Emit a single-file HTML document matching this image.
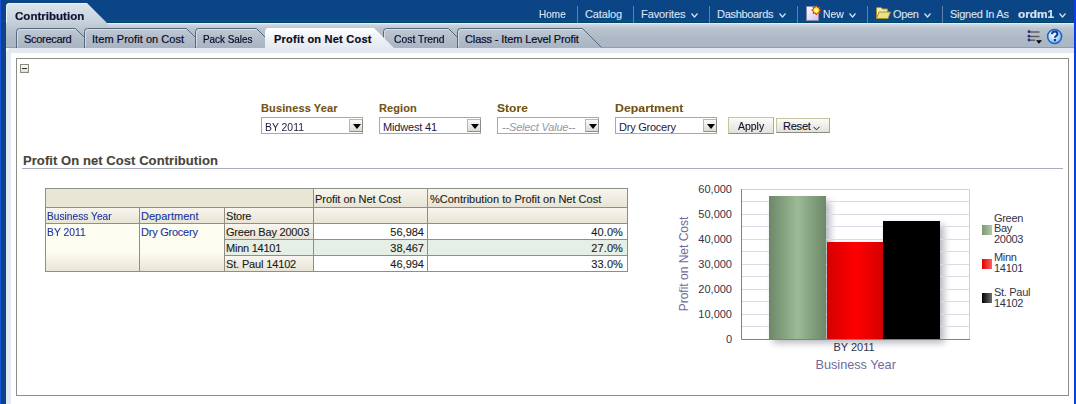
<!DOCTYPE html>
<html><head><meta charset="utf-8">
<style>
*{margin:0;padding:0;box-sizing:border-box}
html,body{width:1076px;height:404px;overflow:hidden;background:#fff;font-family:"Liberation Sans",sans-serif;font-size:11px}
.a{position:absolute;white-space:nowrap;line-height:11px;-webkit-text-stroke:0.12px currentColor}
#hdr{left:0;top:0;width:1076px;height:23px;background:linear-gradient(#0c4585 0,#0c4585 20px,#08507f 20px,#08507f 22px,#044272 22px)}
#lb{left:0;top:0;width:1px;height:404px;background:#1a4fe0}
#lb2{left:1px;top:22px;width:5px;height:382px;background:#0c4585}
#rb{left:1074px;top:0;width:2px;height:404px;background:#0a3fe0}
#tabbar{left:6px;top:23px;width:1068px;height:25px;background:linear-gradient(#e6ecf0 0,#e6ecf0 1px,#d4dde4 1px,#c6d0da 3px,#b8c3ce 6px,#aeb9c6 15px,#a9b5c2 24px,#909eac 24px,#909eac 25px)}
#panel{left:6px;top:48px;width:1068px;height:356px;background:#e2e9f0;border-top-left-radius:5px}
#panelin{left:11px;top:53px;width:1063px;height:351px;background:#fff}
#box{left:16px;top:58px;width:1053px;height:338px;border:1px solid #8e8e86}
.nav{color:#d6e4f3;top:9px}
.sep{position:absolute;top:6px;width:1px;height:17px;background:#5d83b2}
.tab{color:#0a0a28;top:34px;-webkit-text-stroke:0.2px #0a0a28}
.flbl{color:#745414;font-weight:bold;top:103px}
.sel{position:absolute;top:117px;height:17px;border:1px solid #a9a9a2;background:#fff}
.sel .v{position:absolute;left:2px;top:4px;color:#1a1a3a;line-height:11px}
.sel .btn{position:absolute;top:1px;width:14px;height:13px;border:1px solid #b8b8b0;border-right-color:#8c8c86;border-bottom-color:#8c8c86;background:linear-gradient(#fafaf8,#dcdcd6)}
.sel .btn:after{content:"";position:absolute;left:3px;top:4px;border-left:4px solid transparent;border-right:4px solid transparent;border-top:5px solid #000}
.pb{position:absolute;border:1px solid #c9c3a0;border-bottom-color:#8c8c84;border-right-color:#a8a89c;background:linear-gradient(#fbfbf8,#e2e2da)}
td{padding:0}
.tc{color:#1c1c1c}
.tb{color:#2a3aa8}
.yl{color:#33334a;font-size:11px}
</style></head><body>
<div class="a" id="hdr"></div>
<div class="a" id="tabbar"></div>
<div class="a" id="panel"></div>
<div class="a" id="panelin"></div>
<div class="a" id="lb"></div>
<div class="a" id="lb2"></div>
<div class="a" id="rb"></div>
<div class="a" id="box"></div>

<!-- tabs svg -->
<svg class="a" style="left:0;top:0" width="620" height="50" viewBox="0 0 620 50">
<defs>
<linearGradient id="gC" gradientUnits="userSpaceOnUse" x1="0" y1="3" x2="0" y2="30"><stop offset="0" stop-color="#dce5eb"/><stop offset="0.3" stop-color="#d3dde5"/><stop offset="0.7" stop-color="#c6d1db"/><stop offset="1" stop-color="#b9c4cf"/></linearGradient>
<linearGradient id="gT" x1="0" y1="0" x2="0" y2="1"><stop offset="0" stop-color="#bfcad4"/><stop offset="0.4" stop-color="#b4bfcb"/><stop offset="1" stop-color="#a8b4c1"/></linearGradient>
<linearGradient id="gA" x1="0" y1="0" x2="0" y2="1"><stop offset="0" stop-color="#ffffff"/><stop offset="0.55" stop-color="#edf1f5"/><stop offset="1" stop-color="#e2e9f0"/></linearGradient>
</defs>
<path d="M6,30 V6.5 Q6,3 9.5,3 H87 L106,22 Q108,25 112,30 Z" fill="url(#gC)"/>
<path d="M6.5,23 V6.5 Q6.5,3.5 9.5,3.5 H87" fill="none" stroke="#eef3f6" stroke-width="1"/>
<path d="M16.5,48 V31.5 Q16.5,28.5 19.5,28.5 H75.5 L94.5,47.5 V48 Z" fill="url(#gT)"/>
<path d="M17.5,47 V32 Q17.5,29.5 20,29.5 H75" fill="none" stroke="#dce4ea" stroke-width="1" opacity="0.8"/>
<path d="M16.5,48 V31.5 Q16.5,28.5 19.5,28.5 H75.5 L94.5,47.5" fill="none" stroke="#56687c" stroke-width="1"/>
<path d="M84.5,48 V31.5 Q84.5,28.5 87.5,28.5 H186.5 L205.5,47.5 V48 Z" fill="url(#gT)"/>
<path d="M85.5,47 V32 Q85.5,29.5 88,29.5 H186" fill="none" stroke="#dce4ea" stroke-width="1" opacity="0.8"/>
<path d="M84.5,48 V31.5 Q84.5,28.5 87.5,28.5 H186.5 L205.5,47.5" fill="none" stroke="#56687c" stroke-width="1"/>
<path d="M195.5,48 V31.5 Q195.5,28.5 198.5,28.5 H256.5 L275.5,47.5 V48 Z" fill="url(#gT)"/>
<path d="M196.5,47 V32 Q196.5,29.5 199,29.5 H256" fill="none" stroke="#dce4ea" stroke-width="1" opacity="0.8"/>
<path d="M195.5,48 V31.5 Q195.5,28.5 198.5,28.5 H256.5 L275.5,47.5" fill="none" stroke="#56687c" stroke-width="1"/>
<path d="M383.5,48 V31.5 Q383.5,28.5 386.5,28.5 H448.5 L467.5,47.5 V48 Z" fill="url(#gT)"/>
<path d="M384.5,47 V32 Q384.5,29.5 387,29.5 H448" fill="none" stroke="#dce4ea" stroke-width="1" opacity="0.8"/>
<path d="M383.5,48 V31.5 Q383.5,28.5 386.5,28.5 H448.5 L467.5,47.5" fill="none" stroke="#56687c" stroke-width="1"/>
<path d="M457.5,48 V31.5 Q457.5,28.5 460.5,28.5 H582.5 L601.5,47.5 V48 Z" fill="url(#gT)"/>
<path d="M458.5,47 V32 Q458.5,29.5 461,29.5 H582" fill="none" stroke="#dce4ea" stroke-width="1" opacity="0.8"/>
<path d="M457.5,48 V31.5 Q457.5,28.5 460.5,28.5 H582.5 L601.5,47.5" fill="none" stroke="#56687c" stroke-width="1"/>
<path d="M265,49 V31.5 Q265,28 268.5,28 H374 L394,48 V49 Z" fill="url(#gA)"/>
</svg>
<div class="a" style="left:15px;top:11px;font-weight:bold;color:#101030;transform:scaleX(1.05);transform-origin:0 0;-webkit-text-stroke:0.2px #101030">Contribution</div>
<div class="a tab" style="left:24px;letter-spacing:-0.3px">Scorecard</div>
<div class="a tab" style="left:92px;letter-spacing:0.06px">Item Profit on Cost</div>
<div class="a tab" style="left:203px;transform:scaleX(0.90);transform-origin:0 0">Pack Sales</div>
<div class="a tab" style="left:274px;font-weight:bold;color:#0c0c20;letter-spacing:0.23px">Profit on Net Cost</div>
<div class="a tab" style="left:394px;transform:scaleX(0.941);transform-origin:0 0">Cost Trend</div>
<div class="a tab" style="left:465px;letter-spacing:-0.12px">Class - Item Level Profit</div>

<!-- header nav -->
<div class="a nav" style="left:539px;transform:scaleX(0.91);transform-origin:0 0">Home</div>
<div class="sep" style="left:577px"></div>
<div class="a nav" style="left:585px;letter-spacing:-0.13px">Catalog</div>
<div class="sep" style="left:633px"></div>
<div class="a nav" style="left:641px;letter-spacing:-0.09px">Favorites</div>
<svg class="a" style="left:691px;top:13px" width="8" height="6"><path d="M0.5,0.5 L3.5,4 L6.5,0.5" fill="none" stroke="#d6e4f3" stroke-width="1.2"/></svg>
<div class="sep" style="left:709px"></div>
<div class="a nav" style="left:717px;letter-spacing:-0.31px">Dashboards</div>
<svg class="a" style="left:779px;top:13px" width="8" height="6"><path d="M0.5,0.5 L3.5,4 L6.5,0.5" fill="none" stroke="#d6e4f3" stroke-width="1.2"/></svg>
<div class="sep" style="left:797px"></div>
<svg class="a" style="left:804px;top:4px" width="18" height="18" viewBox="0 0 18 18">
<defs><linearGradient id="gP" x1="0" y1="0" x2="1" y2="1"><stop offset="0" stop-color="#ffffff"/><stop offset="1" stop-color="#c8c4e0"/></linearGradient></defs>
<path d="M2.5,2.5 H12 L14.5,5 V16.5 H2.5 Z" fill="url(#gP)" stroke="#8a86b0" stroke-width="1"/>
<path d="M16.90,6.20 L14.98,7.31 L15.55,9.45 L13.41,8.88 L12.30,10.80 L11.19,8.88 L9.05,9.45 L9.62,7.31 L7.70,6.20 L9.62,5.09 L9.05,2.95 L11.19,3.52 L12.30,1.60 L13.41,3.52 L15.55,2.95 L14.98,5.09 Z" fill="#ffd830" stroke="#c8400c" stroke-width="1"/><circle cx="12.3" cy="6.2" r="2" fill="#fff890"/>
</svg>
<div class="a nav" style="left:823px;transform:scaleX(0.95);transform-origin:0 0">New</div>
<svg class="a" style="left:849px;top:13px" width="8" height="6"><path d="M0.5,0.5 L3.5,4 L6.5,0.5" fill="none" stroke="#d6e4f3" stroke-width="1.2"/></svg>
<div class="sep" style="left:867px"></div>
<svg class="a" style="left:875px;top:6px" width="17" height="14" viewBox="0 0 17 14">
<path d="M1.5,12.5 V2.5 Q1.5,1.5 2.5,1.5 H6 L7.5,3 H12.5 V5.5" fill="#f4ecac" stroke="#a89030" stroke-width="1"/>
<path d="M1.5,12.5 L4,6 H15.5 L13,12.5 Z" fill="#ece08a" stroke="#a89030" stroke-width="1"/>
</svg>
<div class="a nav" style="left:893px;letter-spacing:-0.33px">Open</div>
<svg class="a" style="left:924px;top:13px" width="8" height="6"><path d="M0.5,0.5 L3.5,4 L6.5,0.5" fill="none" stroke="#d6e4f3" stroke-width="1.2"/></svg>
<div class="sep" style="left:942px"></div>
<div class="a nav" style="left:950px;letter-spacing:-0.26px">Signed In As</div>
<div class="a nav" style="left:1018px;font-weight:bold;transform:scaleX(1.075);transform-origin:0 0;-webkit-text-stroke:0.2px #d6e4f3">ordm1</div>
<svg class="a" style="left:1059px;top:13px" width="8" height="6"><path d="M0.5,0.5 L3.5,4 L6.5,0.5" fill="none" stroke="#d6e4f3" stroke-width="1.2"/></svg>

<!-- toolbar icons -->
<svg class="a" style="left:1026px;top:29px" width="18" height="17" viewBox="0 0 18 17">
<g stroke="#5a5a5a" stroke-width="1.4"><path d="M3.5,3 H13.5"/><path d="M3.5,7.5 H13.5"/><path d="M3.5,11.2 H9"/></g>
<g fill="#30288a"><circle cx="3" cy="2.7" r="1.4"/><circle cx="3" cy="7.2" r="1.4"/><circle cx="3" cy="11" r="1.4"/></g>
<path d="M10,11.3 H16 L13,14.8 Z" fill="#000"/>
</svg>
<svg class="a" style="left:1046px;top:28px" width="18" height="18" viewBox="0 0 18 18">
<defs><radialGradient id="gH" cx="0.42" cy="0.38" r="0.65"><stop offset="0" stop-color="#ffffff"/><stop offset="0.45" stop-color="#c4e4fb"/><stop offset="1" stop-color="#6cb0ea"/></radialGradient></defs>
<circle cx="8.6" cy="8.5" r="7" fill="url(#gH)" stroke="#1c62c8" stroke-width="1.5"/>
<path d="M6.1,6.3 Q6.1,3.6 8.7,3.6 Q11.4,3.6 11.4,6 Q11.4,7.4 10,8.2 Q9,8.8 9,9.8" fill="none" stroke="#0c3c9c" stroke-width="2"/>
<rect x="7.8" y="11" width="2.2" height="2.2" fill="#0c3c9c"/>
</svg>

<!-- collapse icon -->
<div class="a" style="left:20px;top:64px;width:9px;height:9px;border:1px solid #8a8a82;background:linear-gradient(#fbfbf6,#e0e0d4)"></div>
<div class="a" style="left:22px;top:68px;width:5px;height:1px;background:#303030"></div>

<!-- filters -->
<div class="a flbl" style="left:261px;letter-spacing:0.12px">Business Year</div>
<div class="a flbl" style="left:379px;letter-spacing:0.08px">Region</div>
<div class="a flbl" style="left:497px;transform:scaleX(1.10);transform-origin:0 0">Store</div>
<div class="a flbl" style="left:615px;transform:scaleX(1.12);transform-origin:0 0">Department</div>

<div class="sel" style="left:261px;width:102px"><div class="v" style="left:3px;transform:scaleX(0.945);transform-origin:0 0">BY 2011</div><div class="btn" style="left:87px"></div></div>
<div class="sel" style="left:379px;width:102px"><div class="v" style="left:3px;letter-spacing:-0.18px">Midwest 41</div><div class="btn" style="left:87px"></div></div>
<div class="sel" style="left:497px;width:102px"><div class="v" style="left:4px;font-style:italic;color:#9896aa;-webkit-text-stroke:0;letter-spacing:-0.17px">--Select Value--</div><div class="btn" style="left:87px"></div></div>
<div class="sel" style="left:615px;width:102px"><div class="v" style="left:3px;letter-spacing:-0.24px">Dry Grocery</div><div class="btn" style="left:87px"></div></div>

<div class="pb" style="left:728px;top:117px;width:46px;height:17px"></div>
<div class="a" style="left:738px;top:121px;color:#101030;transform:scaleX(0.95);transform-origin:0 0">Apply</div>
<div class="pb" style="left:776px;top:118px;width:54px;height:15px"></div>
<div class="a" style="left:783px;top:121px;color:#101030;letter-spacing:-0.22px">Reset</div>
<svg class="a" style="left:813px;top:126px" width="8" height="6"><path d="M0.5,0.8 L3.5,3.8 L6.5,0.8" fill="none" stroke="#101030" stroke-width="1"/></svg>

<!-- heading -->
<div class="a" style="left:23px;top:154px;font-size:13px;line-height:13px;font-weight:bold;color:#47443a;letter-spacing:0.07px">Profit On net Cost Contribution</div>
<div class="a" style="left:22px;top:168px;width:1041px;height:1px;background:#a7adba"></div>

<!-- table -->
<div class="a" style="left:45px;top:188px;width:583px;height:84px;background:#8f8f88"></div>
<div class="a" style="left:46px;top:189px;width:267px;height:18px;background:#e9e6d6"></div>
<div class="a" style="left:314px;top:189px;width:113px;height:18px;background:linear-gradient(#f8f6ee,#e7e4d5)"></div>
<div class="a" style="left:428px;top:189px;width:199px;height:18px;background:linear-gradient(#f8f6ee,#e7e4d5)"></div>
<div class="a" style="left:46px;top:208px;width:93px;height:15px;background:linear-gradient(#f8f6ee,#e7e4d5)"></div>
<div class="a" style="left:140px;top:208px;width:84px;height:15px;background:linear-gradient(#f8f6ee,#e7e4d5)"></div>
<div class="a" style="left:225px;top:208px;width:88px;height:15px;background:linear-gradient(#f8f6ee,#e7e4d5)"></div>
<div class="a" style="left:314px;top:208px;width:113px;height:15px;background:linear-gradient(#f8f6ee,#e7e4d5)"></div>
<div class="a" style="left:428px;top:208px;width:199px;height:15px;background:linear-gradient(#f8f6ee,#e7e4d5)"></div>
<div class="a" style="left:46px;top:224px;width:93px;height:47px;background:linear-gradient(#fdfdf1 0,#fcfcf0 28px,#e9e6d6 47px)"></div>
<div class="a" style="left:140px;top:224px;width:84px;height:47px;background:linear-gradient(#fdfdf1 0,#fcfcf0 28px,#e9e6d6 47px)"></div>
<div class="a" style="left:225px;top:224px;width:88px;height:15px;background:linear-gradient(#f8f6ee,#e7e4d5)"></div>
<div class="a" style="left:225px;top:240px;width:88px;height:15px;background:#e6efe5"></div>
<div class="a" style="left:225px;top:256px;width:88px;height:15px;background:linear-gradient(#f8f6ee,#e7e4d5)"></div>
<div class="a" style="left:314px;top:224px;width:113px;height:15px;background:#fff"></div>
<div class="a" style="left:314px;top:240px;width:113px;height:15px;background:#e6efe5"></div>
<div class="a" style="left:314px;top:256px;width:113px;height:15px;background:#fff"></div>
<div class="a" style="left:428px;top:224px;width:199px;height:15px;background:#fff"></div>
<div class="a" style="left:428px;top:240px;width:199px;height:15px;background:#e6efe5"></div>
<div class="a" style="left:428px;top:256px;width:199px;height:15px;background:#fff"></div>
<div class="a" style="left:315px;top:194px;color:#1c1c1c;letter-spacing:-0.05px">Profit on Net Cost</div>
<div class="a" style="left:430px;top:194px;color:#1c1c1c;letter-spacing:0px">%Contribution to Profit on Net Cost</div>
<div class="a" style="left:47px;top:211px;color:#2236a2;transform:scaleX(0.927);transform-origin:0 0">Business Year</div>
<div class="a" style="left:141px;top:211px;color:#2236a2;letter-spacing:0px">Department</div>
<div class="a" style="left:226px;top:211px;color:#1c1c1c;letter-spacing:-0.2px">Store</div>
<div class="a" style="left:47px;top:227px;color:#2236a2;transform:scaleX(0.938);transform-origin:0 0">BY 2011</div>
<div class="a" style="left:141px;top:227px;color:#2236a2;letter-spacing:-0.24px">Dry Grocery</div>
<div class="a" style="left:226px;top:227px;color:#1c1c1c;letter-spacing:-0.21px">Green Bay 20003</div>
<div class="a" style="left:226px;top:243px;color:#1c1c1c;letter-spacing:-0.24px">Minn 14101</div>
<div class="a" style="left:226px;top:259px;color:#1c1c1c;letter-spacing:-0.15px">St. Paul 14102</div>
<div class="a" style="right:652px;top:227px;color:#1c1c1c;letter-spacing:0px">56,984</div>
<div class="a" style="right:453px;top:227px;color:#1c1c1c;letter-spacing:0.1px">40.0%</div>
<div class="a" style="right:652px;top:243px;color:#1c1c1c;letter-spacing:0px">38,467</div>
<div class="a" style="right:453px;top:243px;color:#1c1c1c;letter-spacing:0.1px">27.0%</div>
<div class="a" style="right:652px;top:259px;color:#1c1c1c;letter-spacing:0px">46,994</div>
<div class="a" style="right:453px;top:259px;color:#1c1c1c;letter-spacing:0.1px">33.0%</div>

<!-- chart -->
<svg class="a" style="left:660px;top:175px" width="410" height="210" viewBox="660 175 410 210">
<defs>
<linearGradient id="bG" x1="0" y1="0" x2="1" y2="0"><stop offset="0" stop-color="#6c8868"/><stop offset="0.5" stop-color="#9cba96"/><stop offset="1" stop-color="#6c8868"/></linearGradient>
<linearGradient id="bR" x1="0" y1="0" x2="1" y2="0"><stop offset="0" stop-color="#d40000"/><stop offset="0.5" stop-color="#ff0000"/><stop offset="1" stop-color="#d40000"/></linearGradient>
<linearGradient id="lG" x1="0" y1="0" x2="1" y2="0"><stop offset="0" stop-color="#7a9a72"/><stop offset="1" stop-color="#b4c8ac"/></linearGradient>
<linearGradient id="lR" x1="0" y1="0" x2="1" y2="0"><stop offset="0" stop-color="#e00000"/><stop offset="1" stop-color="#ff6060"/></linearGradient>
<linearGradient id="lB" x1="0" y1="0" x2="1" y2="0"><stop offset="0" stop-color="#000"/><stop offset="1" stop-color="#707070"/></linearGradient>
<filter id="sh" x="-20%" y="-20%" width="150%" height="150%"><feGaussianBlur stdDeviation="3.5"/></filter>
</defs>
<path filter="url(#sh)" fill="#1a1a3a" opacity="0.32" d="M773,201 H830 V246 H887 V225 H944 V343 H773 Z"/>
<path d="M742,201.5 H969" stroke="#dadae4" stroke-width="1"/>
<path d="M742,214.5 H969" stroke="#dadae4" stroke-width="1"/>
<path d="M742,226.5 H969" stroke="#dadae4" stroke-width="1"/>
<path d="M742,239.5 H969" stroke="#dadae4" stroke-width="1"/>
<path d="M742,251.5 H969" stroke="#dadae4" stroke-width="1"/>
<path d="M742,264.5 H969" stroke="#dadae4" stroke-width="1"/>
<path d="M742,276.5 H969" stroke="#dadae4" stroke-width="1"/>
<path d="M742,289.5 H969" stroke="#dadae4" stroke-width="1"/>
<path d="M742,301.5 H969" stroke="#dadae4" stroke-width="1"/>
<path d="M742,314.5 H969" stroke="#dadae4" stroke-width="1"/>
<path d="M742,326.5 H969" stroke="#dadae4" stroke-width="1"/>
<path d="M742,189.5 H969.5 V339" stroke="#d0d0dc" stroke-width="1" fill="none"/>

<rect x="742" y="190" width="227" height="149" fill="none"/>
<rect x="769" y="196" width="57" height="143" fill="url(#bG)"/>
<rect x="827" y="242" width="56" height="97" fill="url(#bR)"/>
<rect x="883" y="221" width="57" height="118" fill="#000"/>
<path d="M741.5,189 V339.5 H970" stroke="#7c7ca6" stroke-width="1" fill="none"/>
<text x="732" y="193" text-anchor="end" font-family="Liberation Sans" font-size="11" fill="#33334a">60,000</text>
<text x="732" y="218" text-anchor="end" font-family="Liberation Sans" font-size="11" fill="#33334a">50,000</text>
<text x="732" y="243" text-anchor="end" font-family="Liberation Sans" font-size="11" fill="#33334a">40,000</text>
<text x="732" y="268" text-anchor="end" font-family="Liberation Sans" font-size="11" fill="#33334a">30,000</text>
<text x="732" y="293" text-anchor="end" font-family="Liberation Sans" font-size="11" fill="#33334a">20,000</text>
<text x="732" y="318" text-anchor="end" font-family="Liberation Sans" font-size="11" fill="#33334a">10,000</text>
<text x="732" y="343" text-anchor="end" font-family="Liberation Sans" font-size="11" fill="#33334a">0</text>
<text x="854" y="351" text-anchor="middle" font-family="Liberation Sans" font-size="11" fill="#33334a">BY 2011</text>
<text x="855.7" y="369" text-anchor="middle" font-family="Liberation Sans" font-size="12.7" fill="#6c6c9c">Business Year</text>
<text transform="translate(688,264) rotate(-90)" x="0" y="0" text-anchor="middle" font-family="Liberation Sans" font-size="12" fill="#6c6c9c">Profit on Net Cost</text>
<rect x="982" y="225" width="10" height="10" fill="url(#lG)"/>
<rect x="982" y="259" width="10" height="10" fill="url(#lR)"/>
<rect x="982" y="293" width="10" height="10" fill="url(#lB)"/>
<text x="994" y="221.7" font-family="Liberation Sans" font-size="11" fill="#33334a" letter-spacing="-0.3">Green</text>
<text x="994" y="232.4" font-family="Liberation Sans" font-size="11" fill="#33334a" letter-spacing="-0.3">Bay</text>
<text x="994" y="243" font-family="Liberation Sans" font-size="11" fill="#33334a" letter-spacing="-0.3">20003</text>
<text x="994" y="260.8" font-family="Liberation Sans" font-size="11" fill="#33334a" letter-spacing="-0.3">Minn</text>
<text x="994" y="271.5" font-family="Liberation Sans" font-size="11" fill="#33334a" letter-spacing="-0.3">14101</text>
<text x="994" y="295.8" font-family="Liberation Sans" font-size="11" fill="#33334a" letter-spacing="-0.3">St. Paul</text>
<text x="994" y="306.8" font-family="Liberation Sans" font-size="11" fill="#33334a" letter-spacing="-0.3">14102</text>
</svg>

</body></html>
